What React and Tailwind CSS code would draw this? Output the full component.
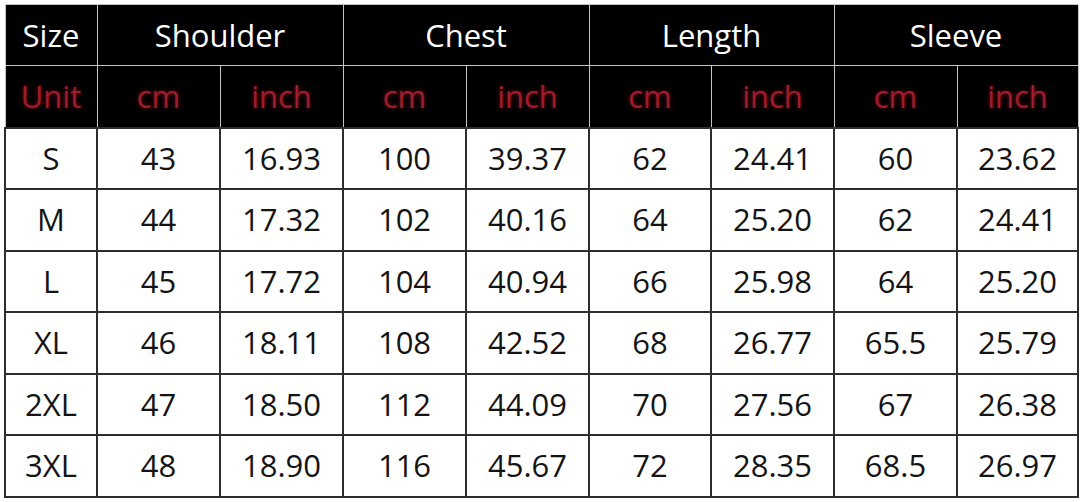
import React from "react";

const rows = [
  ["S", "43", "16.93", "100", "39.37", "62", "24.41", "60", "23.62"],
  ["M", "44", "17.32", "102", "40.16", "64", "25.20", "62", "24.41"],
  ["L", "45", "17.72", "104", "40.94", "66", "25.98", "64", "25.20"],
  ["XL", "46", "18.11", "108", "42.52", "68", "26.77", "65.5", "25.79"],
  ["2XL", "47", "18.50", "112", "44.09", "70", "27.56", "67", "26.38"],
  ["3XL", "48", "18.90", "116", "45.67", "72", "28.35", "68.5", "26.97"],
];

const widths = [92, 123, 123, 123, 123, 122, 123, 123, 121];
const rowHeights = [61, 62, 61, 62, 61, 62];

export default function App() {
  return (
    <div
      className="w-[1080px] h-[502px] bg-white pl-[4px] pt-[4px] overflow-hidden"
      style={{ fontFamily: '"Open Sans", "Noto Sans", sans-serif' }}
    >
      <table className="table-fixed border-collapse w-[1074px] text-[31px] leading-none font-normal">
        <colgroup>
          {widths.map((w, i) => (
            <col key={i} style={{ width: w }} />
          ))}
        </colgroup>
        <thead>
          <tr className="h-[61px] bg-black text-white">
            <th className="border border-[#c4c4c4] font-normal text-center">Size</th>
            <th colSpan={2} className="border border-[#c4c4c4] font-normal text-center">Shoulder</th>
            <th colSpan={2} className="border border-[#c4c4c4] font-normal text-center">Chest</th>
            <th colSpan={2} className="border border-[#c4c4c4] font-normal text-center">Length</th>
            <th colSpan={2} className="border border-[#c4c4c4] font-normal text-center">Sleeve</th>
          </tr>
          <tr className="h-[62px] bg-black text-[#a01c2a] [text-shadow:0_0_4px_rgba(150,15,30,0.8)]">
            {["Unit", "cm", "inch", "cm", "inch", "cm", "inch", "cm", "inch"].map((t, i) => (
              <th key={i} className="border border-[#c4c4c4] font-normal text-center">
                {t}
              </th>
            ))}
          </tr>
        </thead>
        <tbody>
          {rows.map((r, ri) => (
            <tr key={ri} style={{ height: rowHeights[ri] }} className="text-[#141414]">
              {r.map((c, ci) => (
                <td key={ci} className="border-2 border-[#2e2e2e] text-center">
                  {c}
                </td>
              ))}
            </tr>
          ))}
        </tbody>
      </table>
    </div>
  );
}
